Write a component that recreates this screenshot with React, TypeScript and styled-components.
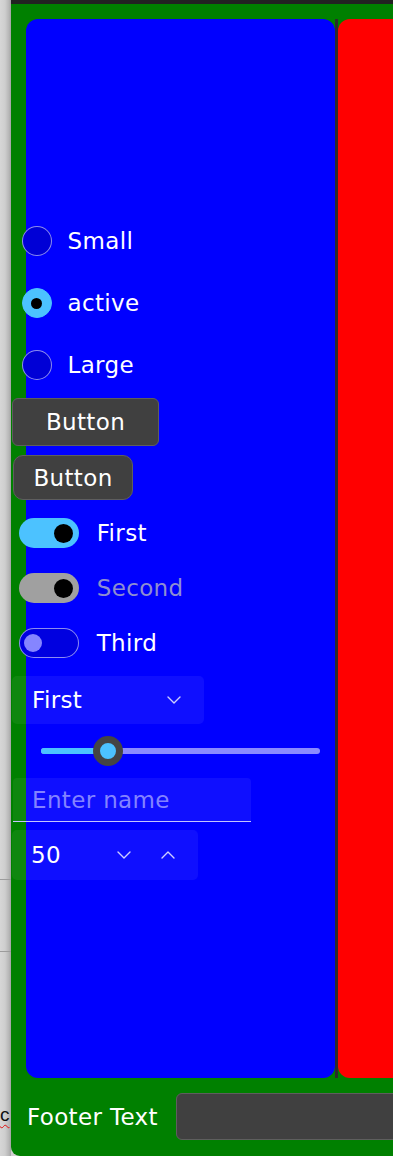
import React, { useState } from 'react'
import styled, { createGlobalStyle } from 'styled-components'
import { ChevronDown, ChevronUp } from 'lucide-react'

const GlobalStyle = createGlobalStyle`
  * {
    box-sizing: border-box;
  }
  html,
  body {
    margin: 0;
    padding: 0;
  }
  body {
    width: 393px;
    height: 1156px;
    overflow: hidden;
    background: #cfcfcf;
    font-family: 'DejaVu Sans', 'Noto Sans', sans-serif;
  }
`

type ToggleState = 'on' | 'disabled' | 'off'

const radios = ['Small', 'active', 'Large']

const toggles: { label: string; state: ToggleState }[] = [
  { label: 'First', state: 'on' },
  { label: 'Second', state: 'disabled' },
  { label: 'Third', state: 'off' },
]

export default function App() {
  const [picked, setPicked] = useState('active')
  const [amount, setAmount] = useState(50)
  const level = 24

  return (
    <>
      <GlobalStyle />
      <Page>
        <Backdrop>
          <Rule $h={880} />
          <Rule $h={72} />
          <Word>c</Word>
        </Backdrop>

        <Window>
          <Panels>
            <BluePanel>
              <Content>
                {radios.map((r) => (
                  <RadioRow key={r} onClick={() => setPicked(r)}>
                    <RadioCircle $checked={picked === r}>
                      {picked === r && <RadioDot />}
                    </RadioCircle>
                    <span>{r}</span>
                  </RadioRow>
                ))}

                <Button $w={147} $h={48} $r={6} $top={2}>
                  Button
                </Button>
                <Button $w={120} $h={45} $r={10} $top={9} $left={1}>
                  Button
                </Button>

                <ToggleGroup>
                  {toggles.map((t) => (
                    <ToggleRow key={t.label}>
                      <Track $state={t.state}>
                        <Knob $state={t.state} />
                      </Track>
                      <ToggleLabel $dim={t.state === 'disabled'}>
                        {t.label}
                      </ToggleLabel>
                    </ToggleRow>
                  ))}
                </ToggleGroup>

                <Select>
                  <span>First</span>
                  <ChevronDown size={24} strokeWidth={1.4} color="#cfcfff" />
                </Select>

                <Slider>
                  <SliderTrack>
                    <SliderFill style={{ width: `${level}%` }} />
                    <SliderThumb style={{ left: `${level}%` }} />
                  </SliderTrack>
                </Slider>

                <TextField placeholder="Enter name" />

                <Stepper>
                  <StepperValue>{amount}</StepperValue>
                  <StepButtons>
                    <StepButton onClick={() => setAmount(amount - 1)}>
                      <ChevronDown size={24} strokeWidth={1.4} color="#cfcfff" />
                    </StepButton>
                    <StepButton onClick={() => setAmount(amount + 1)}>
                      <ChevronUp size={24} strokeWidth={1.4} color="#cfcfff" />
                    </StepButton>
                  </StepButtons>
                </Stepper>
              </Content>
            </BluePanel>
            <Divider />
            <RedPanel />
          </Panels>

          <Footer>
            <FooterText>Footer Text</FooterText>
            <FooterInput />
          </Footer>
        </Window>
      </Page>
    </>
  )
}

const Page = styled.div`
  display: flex;
  width: 393px;
  height: 1156px;
  overflow: hidden;
`

const Backdrop = styled.div`
  flex: 0 0 11px;
  display: flex;
  flex-direction: column;
  overflow: hidden;
  background: linear-gradient(
    to right,
    #d6d6d6 0,
    #cecece 5px,
    #b6b6b6 9px,
    #a4a4a4 11px
  );
`

const Rule = styled.div<{ $h: number }>`
  flex-shrink: 0;
  height: ${({ $h }) => $h}px;
  border-bottom: 1px solid #9c9c9c;
`

const Word = styled.span`
  margin-top: 151px;
  height: 24px;
  line-height: 24px;
  white-space: nowrap;
  font-family: 'Liberation Sans', sans-serif;
  font-size: 19px;
  color: #111;
  text-decoration: underline wavy #e01010;
  text-decoration-thickness: 1px;
  text-underline-offset: 3px;
`

const Window = styled.div`
  flex: 0 0 720px;
  display: flex;
  flex-direction: column;
  background: #008000;
  border-top: 4px solid #222;
  border-bottom-left-radius: 9px;
  padding: 15px 0 0 15px;
  letter-spacing: 0.35px;
`

const Panels = styled.div`
  display: flex;
  height: 1059px;
  flex-shrink: 0;
`

const BluePanel = styled.div`
  width: 309px;
  flex-shrink: 0;
  background: #0000ff;
  border-radius: 12px;
  display: flex;
  flex-direction: column;
  justify-content: center;
  padding-bottom: 7px;
`

const Divider = styled.div`
  width: 3px;
  flex-shrink: 0;
  background: #2c2c2c;
`

const RedPanel = styled.div`
  width: 380px;
  flex-shrink: 0;
  background: #ff0000;
  border-radius: 12px;
`

const Content = styled.div`
  display: flex;
  flex-direction: column;
  align-items: flex-start;
  margin-left: -14px;
  color: #fff;
  font-size: 23px;
`

const RadioRow = styled.div`
  height: 62px;
  display: flex;
  align-items: center;
  gap: 16px;
  padding-left: 9.5px;
  cursor: pointer;
`

interface RadioCircleProps {
  $checked: boolean
}

const RadioCircle = styled.div<RadioCircleProps>`
  width: 30px;
  height: 30px;
  border-radius: 50%;
  display: flex;
  align-items: center;
  justify-content: center;
  border: 1.5px solid
    ${({ $checked }) => ($checked ? '#4cc2ff' : 'rgba(255, 255, 255, 0.55)')};
  background: ${({ $checked }) => ($checked ? '#4cc2ff' : '#0000d6')};
`

const RadioDot = styled.div`
  width: 11px;
  height: 11px;
  border-radius: 50%;
  background: #000;
`

interface ButtonProps {
  $w: number
  $h: number
  $r: number
  $top: number
  $left?: number
}

const Button = styled.button<ButtonProps>`
  width: ${({ $w }) => $w}px;
  height: ${({ $h }) => $h}px;
  border-radius: ${({ $r }) => $r}px;
  margin: ${({ $top, $left = 0 }) => `${$top}px 0 0 ${$left}px`};
  padding: 0;
  background: #404040;
  border: 1.5px solid #5e5e5e;
  color: #fff;
  font-family: inherit;
  font-size: 23px;
  letter-spacing: 0.35px;
  cursor: pointer;
`

const ToggleGroup = styled.div`
  display: flex;
  flex-direction: column;
  margin-top: 5.5px;
`

const ToggleRow = styled.div`
  height: 55px;
  display: flex;
  align-items: center;
  gap: 18px;
  padding-left: 6.7px;
`

interface ToggleProps {
  $state: ToggleState
}

const Track = styled.div<ToggleProps>`
  width: 60px;
  height: 30px;
  border-radius: 15px;
  display: flex;
  align-items: center;
  justify-content: ${({ $state }) =>
    $state === 'off' ? 'flex-start' : 'flex-end'};
  padding: ${({ $state }) => ($state === 'off' ? '0 4.8px' : '0 5.5px')};
  background: ${({ $state }) =>
    $state === 'on' ? '#4cc2ff' : $state === 'disabled' ? '#a0a0a0' : '#0000e0'};
  border: ${({ $state }) =>
    $state === 'off' ? '1.5px solid rgba(255, 255, 255, 0.55)' : 'none'};
`

const Knob = styled.div<ToggleProps>`
  width: ${({ $state }) => ($state === 'off' ? 18 : 19)}px;
  height: ${({ $state }) => ($state === 'off' ? 18 : 19)}px;
  border-radius: 50%;
  background: ${({ $state }) => ($state === 'off' ? '#8585ff' : '#000')};
`

const ToggleLabel = styled.span<{ $dim: boolean }>`
  color: ${({ $dim }) => ($dim ? '#8e8ed0' : '#fff')};
`

const Select = styled.div`
  margin-top: 5.5px;
  width: 192px;
  height: 48px;
  display: flex;
  align-items: center;
  justify-content: space-between;
  padding: 0 18px 0 20px;
  background: rgba(255, 255, 255, 0.06);
  border-radius: 5px;
`

const Slider = styled.div`
  height: 54px;
  display: flex;
  align-items: center;
  padding-left: 29px;
`

const SliderTrack = styled.div`
  position: relative;
  width: 279px;
  height: 6px;
  border-radius: 3px;
  background: #8a8aff;
`

const SliderFill = styled.div`
  height: 100%;
  border-radius: 3px;
  background: #4cc2ff;
`

const SliderThumb = styled.div`
  position: absolute;
  top: 50%;
  width: 30px;
  height: 30px;
  border-radius: 50%;
  transform: translate(-50%, -50%);
  background: #4cc2ff;
  border: 7px solid #444;
`

const TextField = styled.input`
  width: 238px;
  height: 44px;
  margin-left: 1px;
  padding: 0 19px;
  background: rgba(255, 255, 255, 0.06);
  border: none;
  border-bottom: 1.5px solid #c4c4ff;
  border-radius: 4px 4px 0 0;
  color: #fff;
  font-family: inherit;
  font-size: 23px;
  letter-spacing: 0.35px;
  outline: none;

  &::placeholder {
    color: #8383ff;
  }
`

const Stepper = styled.div`
  margin-top: 8px;
  width: 186px;
  height: 50px;
  display: flex;
  align-items: center;
  padding-left: 19px;
  background: rgba(255, 255, 255, 0.06);
  border-radius: 5px;
`

const StepperValue = styled.span`
  flex: 0 0 81px;
`

const StepButtons = styled.div`
  display: flex;
  gap: 20px;
`

const StepButton = styled.div`
  width: 24px;
  height: 24px;
  display: flex;
  cursor: pointer;
`

const Footer = styled.div`
  display: flex;
  align-items: center;
  gap: 18px;
  padding: 15px 0 16px 1px;
`

const FooterText = styled.span`
  color: #fff;
  font-size: 23px;
  white-space: nowrap;
`

const FooterInput = styled.div`
  width: 300px;
  height: 47px;
  flex-shrink: 0;
  background: #404040;
  border: 1.5px solid #5e5e5e;
  border-radius: 6px;
`
